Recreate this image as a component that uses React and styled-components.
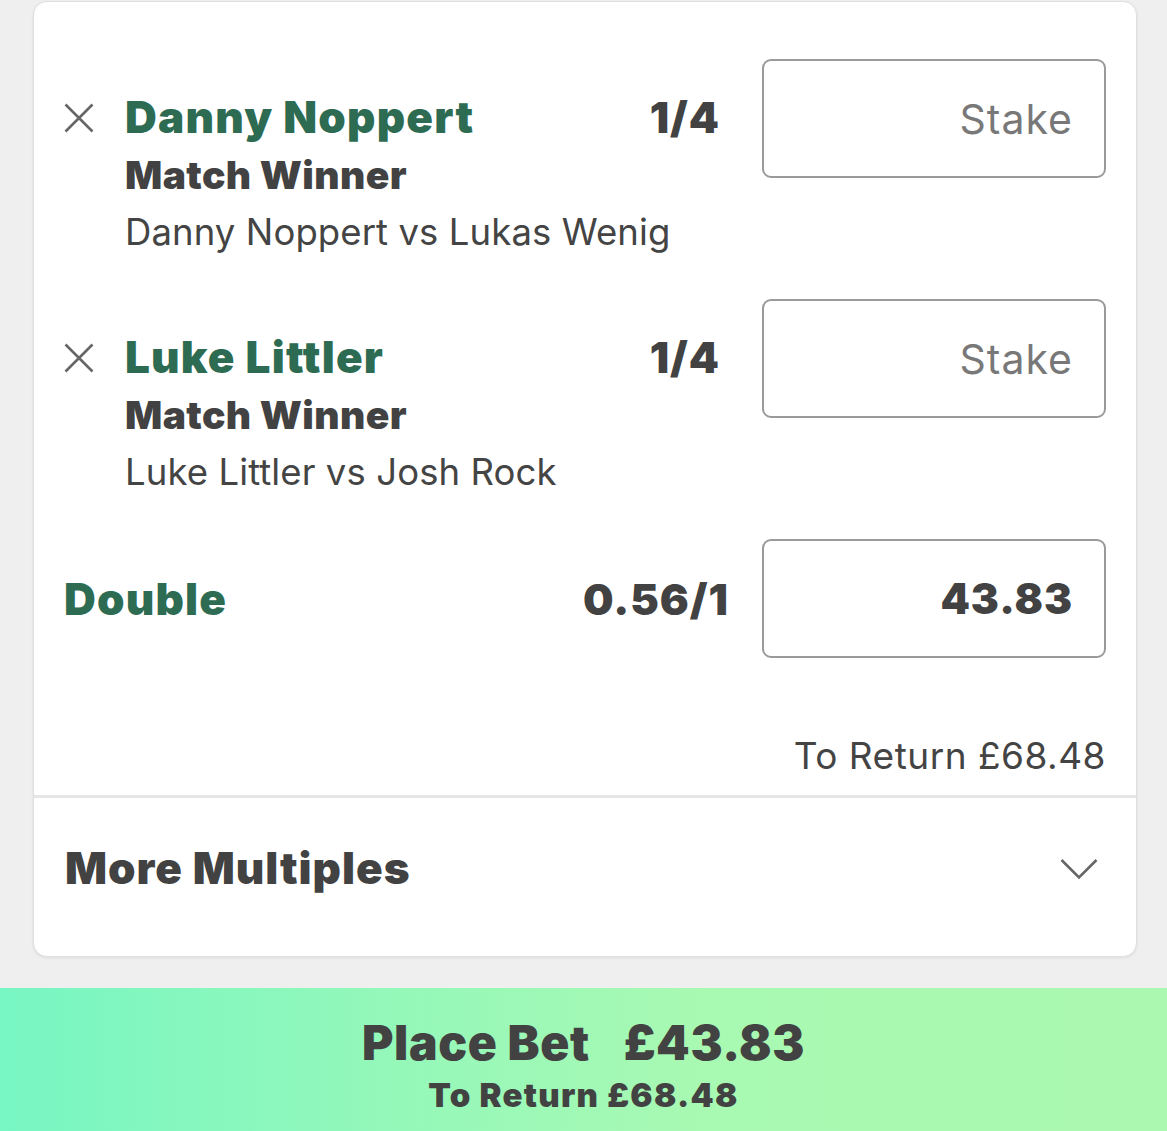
import styled, { createGlobalStyle } from "styled-components";

const GlobalStyle = createGlobalStyle`
  html, body {
    margin: 0;
    padding: 0;
    background: #efefef;
    font-family: Inter, "Noto Sans", sans-serif;
    color: #424242;
  }
  * { box-sizing: border-box; }
`;

const selections = [
  {
    id: 1,
    name: "Danny Noppert",
    market: "Match Winner",
    event: "Danny Noppert vs Lukas Wenig",
    odds: "1/4",
  },
  {
    id: 2,
    name: "Luke Littler",
    market: "Match Winner",
    event: "Luke Littler vs Josh Rock",
    odds: "1/4",
  },
];

function CloseIcon() {
  return (
    <svg width="30" height="30" viewBox="0 0 30 30" fill="none">
      <path d="M1.5 1.5 L28.5 28.5 M28.5 1.5 L1.5 28.5" stroke="#666" strokeWidth="2.6" />
    </svg>
  );
}

function ChevronIcon() {
  return (
    <svg width="38" height="22" viewBox="0 0 38 22" fill="none">
      <path d="M1.5 2 L19 19.5 L36.5 2" stroke="#666" strokeWidth="2.6" />
    </svg>
  );
}

export default function App() {
  return (
    <>
      <GlobalStyle />
      <Page>
        <Card>
          <Slip>
            {selections.map((s) => (
              <SelectionRow key={s.id}>
                <RemoveBtn>
                  <CloseIcon />
                </RemoveBtn>
                <Info>
                  <Name>{s.name}</Name>
                  <Market>{s.market}</Market>
                  <Event>{s.event}</Event>
                </Info>
                <Odds $gap={42}>{s.odds}</Odds>
                <StakeBox>
                  <Placeholder>Stake</Placeholder>
                </StakeBox>
              </SelectionRow>
            ))}
            <MultipleRow>
              <Name>Double</Name>
              <Odds $gap={33} $flat>0.56/1</Odds>
              <StakeBox>
                <StakeValue>43.83</StakeValue>
              </StakeBox>
            </MultipleRow>
            <Returns>To Return £68.48</Returns>
          </Slip>
          <MoreMultiples>
            <span>More Multiples</span>
            <ChevronIcon />
          </MoreMultiples>
        </Card>
        <PlaceBet>
          <PlaceTitle>
            Place Bet<Amount>£43.83</Amount>
          </PlaceTitle>
          <PlaceSub>To Return £68.48</PlaceSub>
        </PlaceBet>
      </Page>
    </>
  );
}

const Page = styled.div`
  display: flex;
  flex-direction: column;
  min-height: 1131px;
  padding-top: 1px;
`;

const Card = styled.div`
  margin: 0 30px 0 33px;
  background: #fff;
  border: 1px solid #e0e0e0;
  border-radius: 14px;
  box-shadow: 0 1px 3px rgba(0, 0, 0, 0.08);
  overflow: hidden;
`;

const Slip = styled.div`
  display: flex;
  flex-direction: column;
  gap: 39px;
  padding: 57px 30px 0 30px;
  border-bottom: 3px solid #e6e6e6;
`;

const SelectionRow = styled.div`
  display: flex;
  align-items: flex-start;
`;

const RemoveBtn = styled.div`
  width: 30px;
  height: 30px;
  margin: 44px 31px 0 0;
  flex-shrink: 0;
  svg { display: block; }
`;

const Info = styled.div`
  display: flex;
  flex-direction: column;
  padding-top: 29px;
  flex: 1;
  min-width: 0;
`;

const Name = styled.div`
  font-size: 44px;
  line-height: 58px;
  font-weight: 900;
  letter-spacing: 1.2px;
  color: #2d6c52;
  white-space: nowrap;
`;

const Market = styled.div`
  font-size: 39px;
  line-height: 58px;
  font-weight: 900;
  letter-spacing: 0.4px;
  color: #424242;
`;

const Event = styled.div`
  font-size: 36.5px;
  line-height: 56px;
  font-weight: 400;
  letter-spacing: 0.1px;
  color: #444;
  white-space: nowrap;
`;

const Odds = styled.div`
  margin-left: auto;
  margin-right: ${(p) => p.$gap}px;
  padding-top: ${(p) => (p.$flat ? 0 : 29)}px;
  font-size: 43px;
  line-height: 58px;
  font-weight: 900;
  letter-spacing: 1px;
  color: #424242;
  white-space: nowrap;
`;

const StakeBox = styled.div`
  width: 344px;
  height: 119px;
  flex-shrink: 0;
  display: flex;
  align-items: center;
  justify-content: flex-end;
  padding-right: 31px;
  border: 2.5px solid #9a9a9a;
  border-radius: 9px;
  background: #fff;
`;

const Placeholder = styled.span`
  font-size: 41px;
  font-weight: 400;
  letter-spacing: 1px;
  color: #787878;
`;

const StakeValue = styled.span`
  font-size: 42px;
  font-weight: 900;
  letter-spacing: 1px;
  color: #424242;
`;

const MultipleRow = styled.div`
  display: flex;
  align-items: center;
`;

const Returns = styled.div`
  margin-top: 37px;
  padding-bottom: 17px;
  text-align: right;
  font-size: 37px;
  line-height: 44px;
  font-weight: 400;
  letter-spacing: 0.5px;
  color: #444;
`;

const MoreMultiples = styled.div`
  height: 158px;
  display: flex;
  align-items: center;
  justify-content: space-between;
  padding: 0 38px 18px 31px;
  font-size: 44px;
  font-weight: 900;
  letter-spacing: 1px;
  color: #424242;
  svg { display: block; margin-top: 2px; }
`;

const PlaceBet = styled.div`
  margin-top: auto;
  height: 143px;
  display: flex;
  flex-direction: column;
  align-items: center;
  padding-top: 26px;
  background: linear-gradient(90deg, #78f6c3 0%, #95f8b9 35%, #a8f9b2 60%, #abf9b0 100%);
`;

const PlaceTitle = styled.div`
  font-size: 48px;
  line-height: 58px;
  font-weight: 900;
  letter-spacing: 0.6px;
  color: #424242;
`;

const Amount = styled.span`
  margin-left: 34px;
`;

const PlaceSub = styled.div`
  font-size: 33px;
  line-height: 46px;
  font-weight: 900;
  letter-spacing: 1.3px;
  color: #424242;
`;
